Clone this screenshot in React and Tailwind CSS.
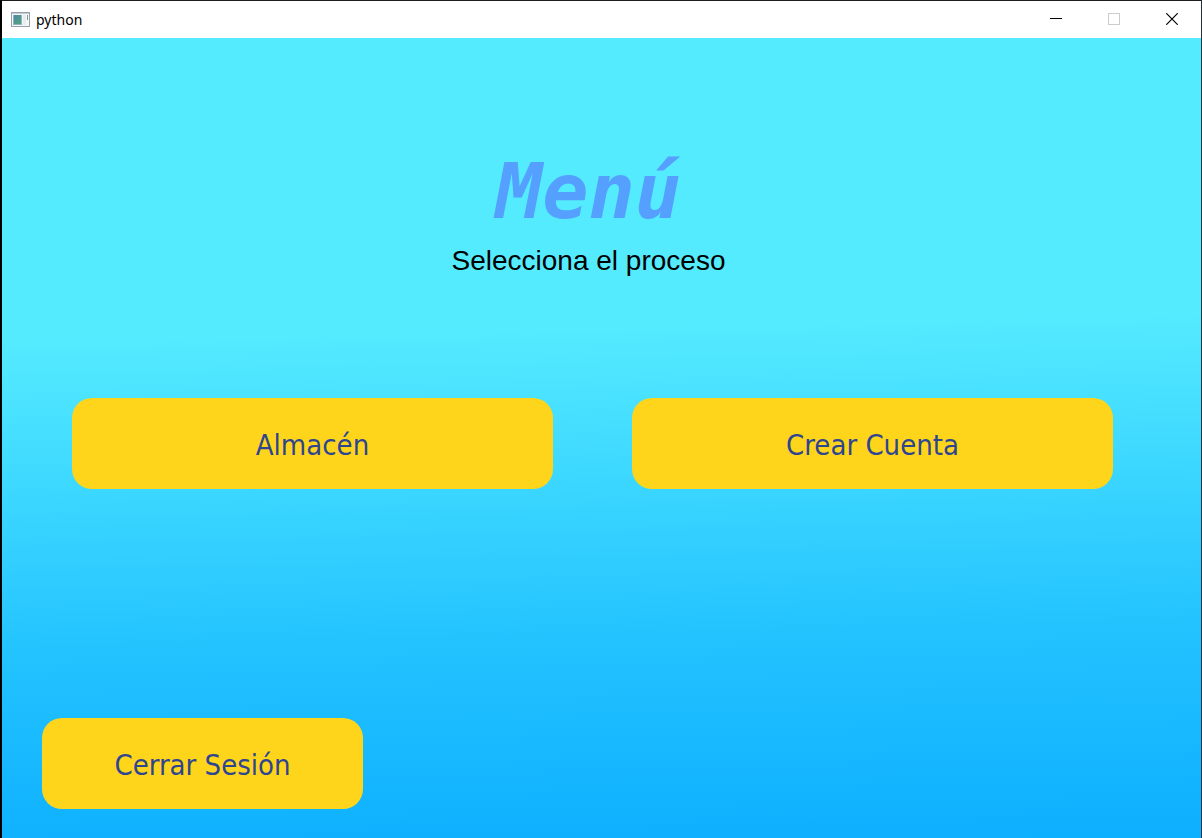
function AppIcon() {
  return (
    <svg width="20" height="16" viewBox="0 0 20 16" aria-hidden="true">
      <defs>
        <linearGradient id="pane" x1="0" y1="0" x2="1" y2="1">
          <stop offset="0" stopColor="#4f86a8" />
          <stop offset="1" stopColor="#4fa67c" />
        </linearGradient>
      </defs>
      <rect x="0.5" y="0.5" width="18" height="14" fill="#f4f6f8" stroke="#98a0ac" />
      <rect x="1" y="1" width="17" height="1" fill="#c3c9d2" />
      <rect x="2" y="3" width="9" height="10" fill="#8fb5bd" />
      <rect x="3" y="3" width="7" height="9" fill="url(#pane)" />
      <rect x="12" y="3" width="3" height="10" fill="#e9ecef" />
      <rect x="16" y="3" width="1" height="5" fill="#7f9a9f" />
    </svg>
  );
}

function TitleBar() {
  return (
    <header className="flex h-[37px] items-center justify-between bg-white">
      <div className="flex items-center gap-1 pl-[9px]">
        <AppIcon />
        <span className="pl-px font-['Noto_Sans','Open_Sans',sans-serif] text-sm text-black">python</span>
      </div>
      <div className="flex h-full pb-0.5">
        <button type="button" aria-label="Minimizar" className="flex w-[58px] items-center justify-center">
          <svg width="12" height="12" viewBox="0 0 12 12" shapeRendering="crispEdges">
            <path d="M0 5.5H12" stroke="#000" />
          </svg>
        </button>
        <button type="button" aria-label="Maximizar" disabled className="flex w-[58px] items-center justify-center">
          <svg width="12" height="12" viewBox="0 0 12 12" shapeRendering="crispEdges">
            <rect x="0.5" y="0.5" width="11" height="11" fill="none" stroke="#ccc" />
          </svg>
        </button>
        <button type="button" aria-label="Cerrar" className="flex w-[58px] items-center justify-center">
          <svg width="12" height="12" viewBox="0 0 12 12">
            <path d="M0.3 0.3L11.7 11.7M11.7 0.3L0.3 11.7" stroke="#000" strokeWidth="1.2" />
          </svg>
        </button>
      </div>
    </header>
  );
}

function MenuButton({ children, className = "" }) {
  return (
    <button
      type="button"
      className={`h-[91px] rounded-[20px] bg-[#ffd51c] pt-1 font-['DejaVu_Sans_Condensed','DejaVu_Sans',sans-serif] text-[29px] text-[#2f4590] ${className}`}
    >
      {children}
    </button>
  );
}

export default function App() {
  return (
    <div className="flex min-h-screen flex-col border-t border-r border-l-2 border-t-[#1c1c1c] border-r-[#26303a] border-l-black">
      <TitleBar />
      <main className="flex flex-1 flex-col justify-between bg-[linear-gradient(178.6deg,#55ebff_0%,#55ebff_36%,#23c3ff_74%,#0dafff_100%)] pb-[29px]">
        <div className="pt-[108px] pr-[88px] pl-[70px]">
          <div className="pr-2 text-center">
            <h1 className="font-['DejaVu_Sans_Mono',monospace] text-[77px] leading-[92px] font-bold text-[#559fff] italic">
              Menú
            </h1>
            <p className="pt-[5px] font-['Liberation_Sans',Arial,sans-serif] text-[28px] leading-[36px] text-black">
              Selecciona el proceso
            </p>
          </div>
          <nav aria-label="Menú" className="grid grid-cols-2 gap-[79px] pt-[119px]">
            <MenuButton>Almacén</MenuButton>
            <MenuButton>Crear Cuenta</MenuButton>
          </nav>
        </div>
        <div className="pl-10">
          <MenuButton className="w-[321px]">Cerrar Sesión</MenuButton>
        </div>
      </main>
    </div>
  );
}
